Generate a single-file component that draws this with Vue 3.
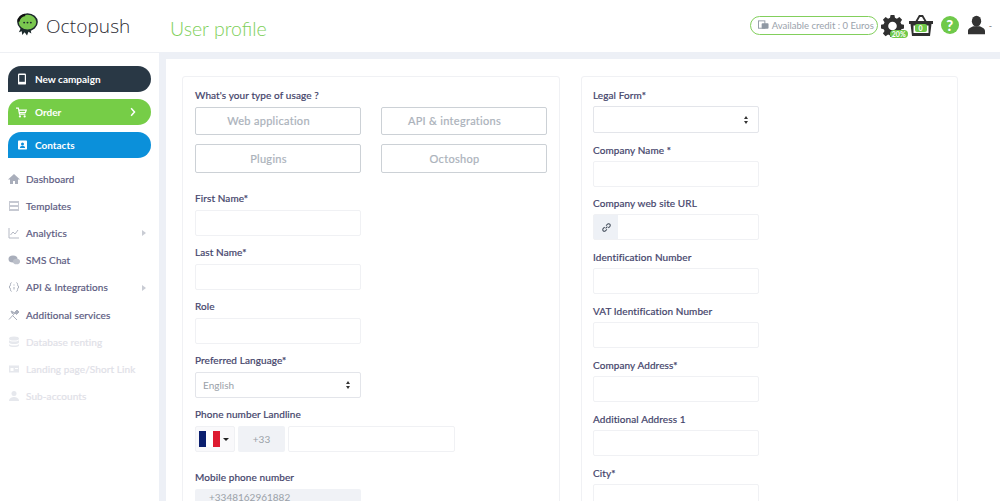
<template>
  <div class="page">
    <header class="topbar">
      <div class="brand">
        <svg class="brand__logo" viewBox="0 0 24 24" width="23" height="23">
          <path d="M5 16l-2 4 3-1 .5 4 2.500-3 2.500 3.500 1.500-4 3 2-1-5z" fill="#1d2a2c" />
          <ellipse cx="12" cy="9.500" rx="10" ry="8.500" fill="#7ac74f" stroke="#1d2a2c" stroke-width="1.600" />
          <path d="M2.500 9a9.500 8 0 0 1 7-7" fill="none" stroke="#111" stroke-width="2.400" />
          <circle cx="8.500" cy="10" r="1" fill="#1d2a2c" />
          <circle cx="12" cy="10" r="1" fill="#1d2a2c" />
          <circle cx="15.500" cy="10" r="1" fill="#1d2a2c" />
        </svg>
        <span class="brand__name">Octopush</span>
      </div>
      <h1 class="topbar__title">User profile</h1>
      <div class="topbar__right">
        <div class="credit">
          <svg viewBox="0 0 12 10" width="11" height="10">
            <rect x="0.500" y="0.500" width="7" height="8" fill="none" stroke="#8f98a3" />
            <rect x="4" y="3" width="7.500" height="6" rx="1" fill="#8f98a3" />
          </svg>
          <span>Available credit : 0 Euros</span>
        </div>
        <div class="status-icon">
          <svg viewBox="0 0 24 24" width="23" height="23">
            <path fill="#2f2f2f" fill-rule="evenodd" d="M10 1h4l.6 3 2 .9 2.600-1.700 2.800 2.800-1.700 2.600.9 2 3 .6v4l-3 .6-.9 2 1.700 2.600-2.800 2.800-2.600-1.700-2 .9-.6 3h-4l-.6-3-2-.9-2.600 1.700-2.800-2.800 1.700-2.600-.9-2-3-.6v-4l3-.6.9-2-1.700-2.600 2.800-2.800 2.600 1.700 2-.9zM12 8a4.500 4.500 0 1 0 0 9 4.500 4.500 0 0 0 0-9z" />
          </svg>
          <span class="status-icon__badge">20%</span>
        </div>
        <div class="status-icon status-icon--basket">
          <svg viewBox="0 0 24 22" width="24" height="22">
            <path d="M7 8l3.500-6h3l3.500 6" fill="none" stroke="#2f2f2f" stroke-width="1.800" />
            <path d="M0 7h24v3h-1.500l-1.500 12H3L1.500 10H0z" fill="#2f2f2f" />
            <rect x="4.500" y="11.500" width="15" height="7.500" fill="#fff" />
          </svg>
          <span class="status-icon__badge status-icon__badge--basket">0</span>
        </div>
        <div class="help">?</div>
        <svg class="user" viewBox="0 0 20 22" width="17" height="20">
          <ellipse cx="10" cy="6.500" rx="5.500" ry="6.500" fill="#333" />
          <path d="M0 22v-4c0-3 4-4.500 6.500-5.500h7c2.500 1 6.500 2.500 6.500 5.500v4z" fill="#333" />
        </svg>
        <span class="dash">-</span>
      </div>
    </header>

    <div class="body">
      <aside class="sidebar">
        <button class="cta cta--dark">
          <svg viewBox="0 0 10 14" width="8" height="12"><rect width="10" height="14" rx="1.500" fill="#fff" /><rect x="1.500" y="2" width="7" height="8.500" fill="#2a3a47" /></svg>
          <span>New campaign</span>
        </button>
        <button class="cta cta--green">
          <svg viewBox="0 0 14 13" width="11" height="11"><path d="M0 1h3l1.500 7.500h7.500M3.500 3.500H13l-1 3H4" fill="none" stroke="#fff" stroke-width="1.500" /><circle cx="5" cy="11.500" r="1.400" fill="#fff" /><circle cx="11" cy="11.500" r="1.400" fill="#fff" /></svg>
          <span>Order</span>
          <svg class="cta__chevron" viewBox="0 0 8 12" width="6" height="10"><path d="M1.500 1l4.500 5-4.500 5" fill="none" stroke="#fff" stroke-width="2" /></svg>
        </button>
        <button class="cta cta--blue">
          <svg viewBox="0 0 12 12" width="9" height="10"><rect width="12" height="12" rx="1" fill="#fff" /><circle cx="6" cy="4.500" r="2" fill="#0c8fdb" /><path d="M2.500 10c0-2 2-3 3.500-3s3.500 1 3.500 3z" fill="#0c8fdb" /></svg>
          <span>Contacts</span>
        </button>

        <nav class="nav">
          <div v-for="item in navItems" :key="item.label" class="nav__item" :class="{ 'nav__item--off': item.off }">
            <svg class="nav__icon" viewBox="0 0 12 12" width="12" height="12" v-html="item.icon"></svg>
            <span>{{ item.label }}</span>
            <i v-if="item.arrow" class="nav__arrow"></i>
          </div>
        </nav>
      </aside>

      <main class="main">
        <div class="sheet">
          <section class="panel panel--left">
            <label class="field__label">What's your type of usage ?</label>
            <div class="usage">
              <button v-for="u in usages" :key="u" class="usage__btn">{{ u }}</button>
            </div>

            <div class="field" v-for="f in leftFields" :key="f">
              <label class="field__label">{{ f }}</label>
              <div class="input"></div>
            </div>

            <div class="field">
              <label class="field__label">Preferred Language*</label>
              <div class="input input--select"><span>English</span><i class="updown"></i></div>
            </div>

            <div class="field field--phone">
              <label class="field__label">Phone number Landline</label>
              <div class="phone">
                <div class="phone__flag">
                  <svg viewBox="0 0 21 16" width="21" height="16">
                    <rect width="7" height="16" fill="#0b1f6e" />
                    <rect x="7" width="7" height="16" fill="#fff" />
                    <rect x="14" width="7" height="16" fill="#dd1a30" />
                  </svg>
                  <i class="caret"></i>
                </div>
                <div class="phone__code">+33</div>
                <div class="input phone__num"></div>
              </div>
            </div>

            <div class="field">
              <label class="field__label">Mobile phone number</label>
              <div class="input input--disabled">+3348162961882</div>
            </div>
          </section>

          <section class="panel panel--right">
            <div class="field">
              <label class="field__label field__label--tight">Legal Form*</label>
              <div class="input input--select input--tall"><span></span><i class="updown"></i></div>
            </div>
            <div class="field field--tight">
              <label class="field__label field__label--tight">Company Name *</label>
              <div class="input"></div>
            </div>
            <div class="field">
              <label class="field__label field__label--tight">Company web site URL</label>
              <div class="input input--addon">
                <div class="addon">
                  <svg viewBox="0 0 12 12" width="11" height="11">
                    <path d="M5 7l2-2M4 5.500L2.200 7.300a1.800 1.800 0 0 0 2.500 2.500L6.500 8M5.500 4l1.800-1.800a1.800 1.800 0 0 1 2.500 2.500L8 6.500" fill="none" stroke="#3c4654" stroke-width="1.100" />
                  </svg>
                </div>
              </div>
            </div>
            <div class="field" v-for="f in rightFields" :key="f">
              <label class="field__label field__label--tight">{{ f }}</label>
              <div class="input"></div>
            </div>
          </section>
        </div>
      </main>
    </div>
  </div>
</template>

<script setup>
const navItems = [
  { label: 'Dashboard', icon: '<path d="M6 1L0 6.500h2V11h3V8h2v3h3V6.500h2z" fill="#a9aebb"/>' },
  { label: 'Templates', icon: '<path d="M1 1h10v10H1zM2 3v2h8V3zM2 7v2h8V7z" fill="#c6c9d2" fill-rule="evenodd"/>' },
  { label: 'Analytics', arrow: true, icon: '<path d="M1 1v10h10M2.500 8l2.500-3 2 2 3-4" fill="none" stroke="#b5b9c4"/>' },
  { label: 'SMS Chat', icon: '<ellipse cx="5" cy="5" rx="4.500" ry="3.500" fill="#a9aebb"/><ellipse cx="8.500" cy="7.500" rx="3.500" ry="2.800" fill="#bcc0ca"/>' },
  { label: 'API & Integrations', arrow: true, icon: '<path d="M3.500 1.500C2 1.500 3 5.500 1 6c2 .5 1 4.500 2.500 4.500M8.500 1.500C10 1.500 9 5.500 11 6c-2 .5-1 4.500-2.500 4.500M6 3.500v1M6 6v2.500" fill="none" stroke="#a9aebb"/>' },
  { label: 'Additional services', icon: '<path d="M1 10.500L7 4M3 2l3 1.500L4.500 5zM5 7l4 4M9 1l2 2-2.500 2.500-2-2z" fill="#a9aebb" stroke="#a9aebb"/>' },
  { label: 'Database renting', off: true, icon: '<ellipse cx="6" cy="2.500" rx="5" ry="2" fill="#e6e8ed"/><path d="M1 4c1 2 9 2 10 0v2.500c-1 2-9 2-10 0zM1 8c1 2 9 2 10 0v1.500c-1 2-9 2-10 0z" fill="#e6e8ed"/>' },
  { label: 'Landing page/Short Link', off: true, icon: '<rect x="1" y="2.500" width="10" height="7" fill="#e6e8ed"/><path d="M2.500 5h3v3h-3zM7 5h3v1H7z" fill="#fff"/>' },
  { label: 'Sub-accounts', off: true, icon: '<circle cx="6" cy="3.500" r="2.500" fill="#e6e8ed"/><path d="M1 11c0-3 3-4 5-4s5 1 5 4z" fill="#e6e8ed"/>' },
]

const usages = ['Web application', 'API & integrations', 'Plugins', 'Octoshop']
const leftFields = ['First Name*', 'Last Name*', 'Role']
const rightFields = [
  'Identification Number',
  'VAT Identification Number',
  'Company Address*',
  'Additional Address 1',
  'City*',
]
</script>

<style>
html,
body {
  margin: 0;
  background: #fff;
  overflow: hidden;
}
</style>

<style scoped>
.page {
  width: 1000px;
  height: 501px;
  overflow: hidden;
  font-family: Lato, 'Open Sans', sans-serif;
  color: #4a4a68;
}

.topbar {
  height: 52px;
  display: flex;
  align-items: center;
  background: #fff;
  box-sizing: border-box;
  padding: 0 0 0 16px;
}

.brand {
  display: flex;
  align-items: center;
  gap: 7px;
  width: 154px;
}

.brand__logo {
  margin-top: -4px;
}

.brand__name {
  font-family: 'Open Sans', sans-serif;
  font-size: 19px;
  font-weight: 300;
  letter-spacing: 0.1px;
  color: #2b2b33;
}

.topbar__title {
  margin: 4px 0 0;
  font-family: Lato, sans-serif;
  font-size: 19.500px;
  font-weight: 300;
  color: #7ecf5a;
}

.topbar__right {
  margin-left: auto;
  display: flex;
  align-items: center;
  height: 30px;
  margin-top: -2px;
  padding-right: 8px;
}

.credit {
  display: flex;
  align-items: center;
  gap: 3px;
  width: 128px;
  height: 19px;
  box-sizing: border-box;
  padding-left: 7px;
  border: 1.500px solid #82cf5c;
  border-radius: 10px;
  font-size: 9.500px;
  white-space: nowrap;
  color: #9aa2ab;
}

.credit svg {
  flex: none;
}

.status-icon {
  position: relative;
  display: flex;
  margin-left: 3px;
  width: 24px;
}

.status-icon--basket {
  margin-left: 4px;
}

.status-icon__badge {
  position: absolute;
  right: -3px;
  bottom: -1px;
  min-width: 11px;
  padding: 0 2px;
  border-radius: 5px;
  background: #6fc94a;
  color: #fff;
  font-size: 7px;
  font-weight: 700;
  line-height: 8px;
  text-align: center;
}

.status-icon__badge--basket {
  right: 6px;
  bottom: 4px;
  min-width: 4px;
  padding: 0 4px;
  border-radius: 2px;
}

.help {
  width: 18px;
  height: 18px;
  margin-left: 8px;
  border-radius: 50%;
  background: #6fc94a;
  color: #fff;
  font-size: 15px;
  font-weight: 900;
  line-height: 18px;
  text-align: center;
}

.user {
  margin-left: 9px;
}

.dash {
  margin-left: 4px;
  font-size: 9px;
  color: #777;
}

.body {
  display: flex;
  height: 449px;
}

.sidebar {
  width: 159px;
  flex: none;
  box-sizing: border-box;
  padding: 13px 8px 0;
  border-top: 1px solid #eef0f4;
  background: #fff;
}

.cta {
  display: flex;
  align-items: center;
  gap: 9px;
  width: 143px;
  height: 26px;
  margin-bottom: 7px;
  padding: 0 0 0 10px;
  border: 0;
  border-radius: 13px 13px 13px 0;
  color: #fff;
  font-family: inherit;
  font-size: 10px;
  font-weight: 700;
  box-sizing: border-box;
}

.cta--dark {
  background: #293845;
}

.cta--green {
  background: #76cd47;
  gap: 8px;
  padding-left: 8px;
}

.cta--blue {
  background: #0b90da;
  gap: 8px;
}

.cta__chevron {
  margin-left: auto;
  margin-right: 15px;
}

.nav {
  margin-top: 5px;
}

.nav__item {
  position: relative;
  display: flex;
  align-items: center;
  gap: 6px;
  height: 27.200px;
  font-size: 10px;
  font-weight: 400;
  letter-spacing: 0.1px;
  -webkit-text-stroke: 0.2px;
  color: #5c5b81;
  white-space: nowrap;
}

.nav__item--off {
  color: #dfe1e8;
}

.nav__icon {
  flex: none;
}

.nav__arrow {
  position: absolute;
  left: 134px;
  top: 11px;
  border-left: 4px solid #c9ccd4;
  border-top: 3px solid transparent;
  border-bottom: 3px solid transparent;
}

.main {
  flex: 1;
  min-width: 0;
  padding: 7px 0 0 7px;
  background: #edf0f6;
}

.sheet {
  display: flex;
  height: 520px;
  background: #fff;
  box-sizing: border-box;
  padding: 17px 0 0 16px;
}

.panel {
  box-sizing: border-box;
  width: 378px;
  height: 500px;
  border: 1px solid #f0f1f4;
  border-radius: 3px;
  padding: 12px 12px 0;
}

.panel--right {
  width: 377px;
  margin-left: 21px;
  padding-left: 11px;
}

.field {
  display: flex;
  flex-direction: column;
  margin-bottom: 10px;
}

.panel--right .field {
  margin-bottom: 11px;
}

.panel--right .field--tight {
  margin-bottom: 10px;
}

.field--phone {
  margin-bottom: 19px;
}

.field__label {
  display: block;
  height: 18px;
  font-size: 10px;
  line-height: 13px;
  font-weight: 400;
  letter-spacing: 0.1px;
  -webkit-text-stroke: 0.2px;
  color: #43436a;
}

.field__label--tight {
  height: 17px;
}

.usage {
  display: grid;
  grid-template-columns: 166px 166px;
  grid-template-rows: 28px 29px;
  column-gap: 20px;
  row-gap: 9px;
  margin-bottom: 19px;
}

.usage__btn {
  height: 100%;
  border: 1px solid #ccd1d6;
  border-radius: 2px;
  background: #fff;
  color: #abb2bb;
  font-family: inherit;
  font-size: 11px;
  font-weight: 400;
  letter-spacing: 0.3px;
  -webkit-text-stroke: 0.2px;
  padding: 0 19px 1px 0;
}

.input {
  box-sizing: border-box;
  width: 166px;
  height: 26px;
  flex: none;
  border: 1px solid #f0f1f4;
  border-radius: 2px;
  background: #fff;
}

.input--select {
  display: flex;
  align-items: center;
  justify-content: space-between;
  padding: 0 9px 0 7px;
  border-color: #e3e5ea;
  font-size: 10px;
  color: #9aa1a8;
}

.input--tall {
  height: 27px;
}

.input--addon {
  display: flex;
}

.input--disabled {
  border: 0;
  padding: 2px 0 0 14px;
  background: #f0f2f6;
  color: #9aa1a8;
  font-size: 10px;
}

.addon {
  display: flex;
  align-items: center;
  justify-content: center;
  width: 24px;
  height: 24px;
  background: #eef1f6;
}

.updown {
  position: relative;
  width: 5px;
  height: 8px;
}

.updown::before,
.updown::after {
  content: '';
  position: absolute;
  left: 0;
  border-left: 2.500px solid transparent;
  border-right: 2.500px solid transparent;
}

.updown::before {
  top: 0;
  border-bottom: 3.500px solid #333;
}

.updown::after {
  bottom: 0;
  border-top: 3.500px solid #333;
}

.phone {
  display: flex;
  gap: 3px;
  height: 26px;
}

.phone__flag {
  box-sizing: border-box;
  display: flex;
  align-items: center;
  gap: 3px;
  width: 40px;
  padding-left: 3px;
  border: 1px solid #f0f1f4;
  border-radius: 2px;
  background: #f9f9fb;
}

.caret {
  border-top: 3px solid #222;
  border-left: 3px solid transparent;
  border-right: 3px solid transparent;
}

.phone__code {
  width: 47px;
  background: #f0f2f6;
  border-radius: 2px;
  color: #9aa1a8;
  font-size: 10px;
  line-height: 26px;
  text-align: center;
}

.phone__num {
  width: 167px;
}
</style>
